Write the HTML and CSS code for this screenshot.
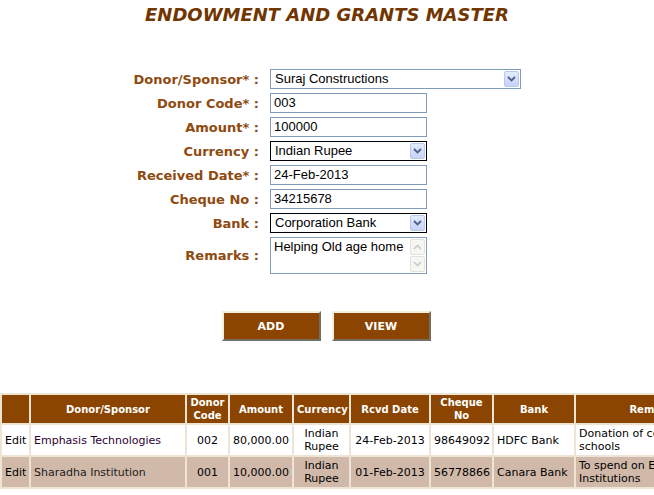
FILE: index.html
```html
<!DOCTYPE html>
<html>
<head>
<meta charset="utf-8">
<link rel="stylesheet" href="styles.css">
</head>
<body>
<h1 class="title">ENDOWMENT AND GRANTS MASTER</h1>
<form class="form">
  <div class="row"><label class="lbl">Donor/Sponsor* :</label><div class="sel sel-wide"><span>Suraj Constructions</span><i class="arrow"><svg width="9" height="6" viewBox="0 0 9 6"><path d="M1 1 L4.5 4.5 L8 1" fill="none" stroke="#4d6185" stroke-width="1.8"/></svg></i></div></div>
  <div class="row"><label class="lbl">Donor Code* :</label><div class="inp">003</div></div>
  <div class="row"><label class="lbl">Amount* :</label><div class="inp">100000</div></div>
  <div class="row"><label class="lbl">Currency :</label><div class="sel sel-dark"><span>Indian Rupee</span><i class="arrow"><svg width="9" height="6" viewBox="0 0 9 6"><path d="M1 1 L4.5 4.5 L8 1" fill="none" stroke="#4d6185" stroke-width="1.8"/></svg></i></div></div>
  <div class="row"><label class="lbl">Received Date* :</label><div class="inp">24-Feb-2013</div></div>
  <div class="row"><label class="lbl">Cheque No :</label><div class="inp">34215678</div></div>
  <div class="row"><label class="lbl">Bank :</label><div class="sel sel-dark"><span>Corporation Bank</span><i class="arrow"><svg width="9" height="6" viewBox="0 0 9 6"><path d="M1 1 L4.5 4.5 L8 1" fill="none" stroke="#4d6185" stroke-width="1.8"/></svg></i></div></div>
  <div class="row row-ta"><label class="lbl">Remarks :</label><div class="ta"><span class="ta-text">Helping Old age home</span><div class="sb"><i class="sbb"><svg width="9" height="6" viewBox="0 0 9 6"><path d="M1 5 L4.5 1.5 L8 5" fill="none" stroke="#c8cbd2" stroke-width="1.6"/></svg></i><i class="sbb"><svg width="9" height="6" viewBox="0 0 9 6"><path d="M1 1 L4.5 4.5 L8 1" fill="none" stroke="#c8cbd2" stroke-width="1.6"/></svg></i></div></div></div>
  <div class="buttons"><button type="button" class="btn">ADD</button><button type="button" class="btn">VIEW</button></div>
</form>
<table class="grid">
  <colgroup><col class="c1"><col class="c2"><col class="c3"><col class="c4"><col class="c5"><col class="c6"><col class="c7"><col class="c8"><col class="c9"></colgroup>
  <thead>
    <tr><th></th><th>Donor/Sponsor</th><th>Donor<br>Code</th><th>Amount</th><th>Currency</th><th>Rcvd Date</th><th>Cheque<br>No</th><th>Bank</th><th>Remarks</th></tr>
  </thead>
  <tbody>
    <tr class="r1"><td class="edit">Edit</td><td>Emphasis Technologies</td><td class="ctr">002</td><td class="ctr">80,000.00</td><td class="ctr">Indian<br>Rupee</td><td class="ctr">24-Feb-2013</td><td class="ctr">98649092</td><td>HDFC Bank</td><td>Donation of computers to<br>schools</td></tr>
    <tr class="r2"><td class="edit">Edit</td><td>Sharadha Institution</td><td class="ctr">001</td><td class="ctr">10,000.00</td><td class="ctr">Indian<br>Rupee</td><td class="ctr">01-Feb-2013</td><td class="ctr">56778866</td><td>Canara Bank</td><td>To spend on Educational<br>Institutions</td></tr>
  </tbody>
</table>
</body>
</html>
```
FILE: styles.css
```css
html, body { margin: 0; padding: 0; background: #fff; overflow: hidden; }
body { width: 654px; height: 495px; font-family: "DejaVu Sans", Verdana, sans-serif; }
.title {
  margin: 0; padding-top: 4px; height: 69px; box-sizing: border-box;
  text-align: center; font-size: 18px; font-weight: bold; font-style: italic;
  color: #713500; letter-spacing: 0;
}
.form { display: flex; flex-direction: column; gap: 4px; }
.row { display: flex; align-items: center; height: 20px; }
.lbl {
  width: 260px; box-sizing: border-box; padding-right: 1px; text-align: right;
  font-weight: bold; font-size: 13px; color: #8f4a10; margin-right: 10px;
}
.inp, .sel, .ta {
  box-sizing: border-box; height: 20px; font-family: "Liberation Sans", Arial, sans-serif;
  font-size: 13px; color: #000; background: #fff; border: 1px solid #7f9db9;
  padding: 0 3px; line-height: 18px; width: 157px;
}
.sel { display: flex; justify-content: space-between; align-items: center; padding: 0 1px 0 4px; }
.sel-wide { width: 251px; }
.sel-dark { border-color: #000; }
.arrow {
  width: 15px; height: 16px; box-sizing: border-box; display: flex; align-items: center; justify-content: center;
  background: linear-gradient(#e3ebfc, #c4d3f7); border: 1px solid #b8c8ef; border-radius: 2px;
}
.row-ta { height: 36px; }
.ta { height: 37px; display: flex; justify-content: space-between; padding: 0 1px 0 3px; line-height: 16px; }
.ta-text { padding-top: 1px; }
.sb { display: flex; flex-direction: column; gap: 1px; padding-top: 1px; }
.sbb {
  width: 15px; height: 16px; box-sizing: border-box; display: flex; align-items: center; justify-content: center;
  background: #f6f6f3; border: 1px solid #e3e3dc; border-radius: 2px;
}
.buttons { display: flex; justify-content: center; gap: 11px; margin-top: 34px; padding-right: 2px; }
.btn {
  width: 99px; height: 30px; background: #8b4500; color: #fff; font-weight: bold;
  font-family: "DejaVu Sans", Verdana, sans-serif; font-size: 11px;
  border: 2px solid; border-color: #f1efe2 #716f64 #716f64 #f1efe2; padding: 0; margin: 0;
}
.grid {
  margin-top: 52px; margin-left: 0; border-collapse: collapse; table-layout: fixed;
  width: 732px; font-size: 11px;
}
.c1 { width: 29px; } .c2 { width: 156px; } .c3 { width: 43px; } .c4 { width: 64px; }
.c5 { width: 57px; } .c6 { width: 80px; } .c7 { width: 63px; } .c8 { width: 82px; } .c9 { width: 158px; }
.grid th, .grid td { border: 2px solid #ede4d6; padding: 1px 3px; }
.grid th { background: #8b4500; color: #fff; font-size: 10px; font-weight: bold; height: 26px; line-height: 13px; }
.grid td { height: 28px; line-height: 13px; color: #000; white-space: nowrap; overflow: hidden; }
.grid .r1 td { background: #fff; }
.grid .r2 td { background: #d1b9a9; }
.grid .r2 td:nth-child(2) { color: #1b1b1b; }
.grid .r1 td:nth-child(2) { color: #2a0033; }
.ctr { text-align: center; }
.edit { color: #18304a; }
```
